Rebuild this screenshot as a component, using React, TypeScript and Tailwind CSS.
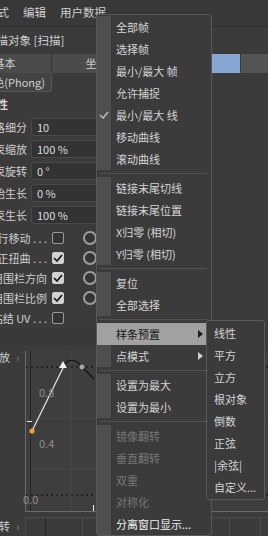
import React from "react";

type Item = {
  label: string;
  checked?: boolean;
  sub?: boolean;
  active?: boolean;
  disabled?: boolean;
  bright?: boolean;
};

const groups: Item[][] = [
  [
    { label: "全部帧" },
    { label: "选择帧" },
    { label: "最小/最大 帧" },
    { label: "允许捕捉" },
    { label: "最小/最大 线", checked: true },
    { label: "移动曲线" },
    { label: "滚动曲线" },
  ],
  [
    { label: "链接末尾切线" },
    { label: "链接末尾位置" },
    { label: "X归零 (相切)" },
    { label: "Y归零 (相切)" },
  ],
  [{ label: "复位" }, { label: "全部选择" }],
  [
    { label: "样条预置", sub: true, active: true },
    { label: "点模式", sub: true },
  ],
  [{ label: "设置为最大" }, { label: "设置为最小" }],
  [
    { label: "镜像翻转", disabled: true },
    { label: "垂直翻转", disabled: true },
    { label: "双重", disabled: true },
    { label: "对称化", disabled: true },
    { label: "分离窗口显示...", bright: true },
  ],
];

const presets = ["线性", "平方", "立方", "根对象", "倒数", "正弦", "|余弦|", "自定义..."];

const fields = [
  { label: "网格细分", value: "10" },
  { label: "结束缩放", value: "100 %" },
  { label: "结束旋转", value: "0 °" },
  { label: "开始生长", value: "0 %" },
  { label: "结束生长", value: "100 %" },
];

const checks = [
  { label: "平行移动 . . .", on: false, radio: true },
  { label: "矫正扭曲 . . .", on: true, radio: true },
  { label: "使用围栏方向", on: true, radio: true },
  { label: "使用围栏比例", on: true, radio: true },
  { label: "粘结 UV . . .", on: false, radio: false },
];

function Tick({ dark }: { dark?: boolean }) {
  return (
    <svg width="10" height="8" viewBox="0 0 10 8">
      <polyline
        points="1,4 4,7 9,1"
        fill="none"
        stroke={dark ? "#111" : "#b8b8b8"}
        strokeWidth="1.6"
      />
    </svg>
  );
}

function Arrow({ color }: { color: string }) {
  return (
    <svg width="5" height="8" viewBox="0 0 5 8">
      <polygon points="0,0 5,4 0,8" fill={color} />
    </svg>
  );
}

function ContextMenu() {
  return (
    <div className="absolute left-[96px] top-[14px] w-[116px] rounded-[3px] border border-[#585858] bg-[#3b3b3b] pt-px">
      {groups.map((g, gi) => (
        <div key={gi}>
          {gi > 0 && (
            <div className="flex h-[7px] items-center pl-[2px] pr-[4px]">
              <div className="h-px w-full bg-[#525252]" />
            </div>
          )}
          {g.map((it) => (
            <div
              key={it.label}
              className={`flex h-[22px] items-center ${it.active ? "bg-[#a1a1a1]" : ""}`}
            >
              <div
                className={`flex h-full w-[14px] shrink-0 items-center justify-center ${
                  it.active ? "" : "bg-[#4e4e4e]"
                }`}
              >
                {it.checked && <Tick />}
              </div>
              <span
                className={`flex-1 whitespace-nowrap pl-[5px] ${
                  it.active
                    ? "text-[#161616]"
                    : it.disabled
                    ? "text-[#767676]"
                    : it.bright
                    ? "text-[#f0f0f0]"
                    : "text-[#d4d4d4]"
                }`}
              >
                {it.label}
              </span>
              {it.sub && (
                <span className="pr-[8px]">
                  <Arrow color={it.active ? "#1a1a1a" : "#cfcfcf"} />
                </span>
              )}
            </div>
          ))}
        </div>
      ))}
    </div>
  );
}

function SubMenu() {
  return (
    <div className="absolute left-[206px] top-[320px] w-[59px] rounded-[3px] border border-[#5a5a5a] bg-[#3b3b3b] py-[1px]">
      {presets.map((p) => (
        <div key={p} className="flex h-[22px] items-center whitespace-nowrap pl-[7px] text-[#d4d4d4]">
          {p}
        </div>
      ))}
    </div>
  );
}

function Graph() {
  return (
    <div className="relative h-[161px] w-[243px] border-b border-l border-[#6c6c6c] bg-[#3e3e3e]">
      <svg className="absolute left-0 top-0 overflow-visible" width="243" height="160">
        {/* grid */}
        <line x1="45" y1="0" x2="45" y2="160" stroke="#474747" />
        <line x1="0" y1="67" x2="243" y2="67" stroke="#474747" />
        <line x1="0" y1="118" x2="243" y2="118" stroke="#474747" />
        <line x1="4.5" y1="0" x2="4.5" y2="160" stroke="#262626" />
        <line x1="0" y1="16" x2="243" y2="16" stroke="#111" strokeDasharray="2 3" />
        <line x1="0" y1="144" x2="243" y2="144" stroke="#111" strokeDasharray="2 3" />
        <line x1="1" y1="70.5" x2="6" y2="70.5" stroke="#eee" />
        <line x1="67.5" y1="154" x2="67.5" y2="160" stroke="#eee" />
        {/* curve */}
        <path d="M37 16 C42 6 50 8 56 16 C60 20 64 24 68 28" fill="none" stroke="#111" strokeWidth="1.2" />
        <line x1="6" y1="80" x2="37" y2="17" stroke="#e8e8e8" strokeWidth="1.2" />
        <polygon points="37,10 33,17 41,17" fill="#f2f2f2" />
        <circle cx="56" cy="16" r="2.4" fill="#a8a8a8" />
        <circle cx="6" cy="80" r="2.6" fill="#f29c38" />
        <text x="13" y="46" fill="#8d8d8d" fontSize="11">0.8</text>
        <text x="13" y="97" fill="#8d8d8d" fontSize="11">0.4</text>
        <text x="-3" y="153" fill="#8d8d8d" fontSize="11">0.0</text>
      </svg>
    </div>
  );
}

export default function App() {
  return (
    <div
      className="relative h-[536px] w-[268px] overflow-hidden bg-[#3b3b3b] text-[11px] leading-none text-[#cfcfcf]"
      style={{ fontFamily: "'Noto Sans CJK SC', 'Noto Sans', sans-serif" }}
    >
      {/* menubar */}
      <div className="flex h-[27px] items-center gap-[14px] border-b border-[#2f2f2f] bg-[#383838] pl-0">
        <span className="-ml-[14px] text-[11.5px]">模式</span>
        <span className="text-[11.5px]">编辑</span>
        <span className="text-[11.5px]">用户数据</span>
      </div>

      {/* title */}
      <div className="flex h-[27px] items-center whitespace-nowrap">
        <span className="-ml-[15px] text-[11.5px]">扫描对象 [扫描]</span>
      </div>

      {/* tabs */}
      <div className="flex h-[19px] items-stretch whitespace-nowrap bg-[#4b4b4b]">
        <div className="-ml-[42px] flex w-[94px] shrink-0 items-center justify-center border-r border-[#353535]">基本</div>
        <div className="flex w-[90px] shrink-0 items-center justify-center border-r border-[#353535]">坐标</div>
        <div className="w-[69px] shrink-0" />
        <div className="w-[29px] shrink-0 bg-[#88a6d2]" />
        <div className="flex-1 border-l border-[#3a3a3a] bg-[#545454]" />
      </div>

      {/* shading tab */}
      <div className="flex h-[19px] w-[52px] items-center justify-end overflow-hidden whitespace-nowrap rounded-br-[3px] border-b border-r border-[#555] bg-[#434343] pr-[6px]">
        着色(Phong)
      </div>

      {/* section title */}
      <div className="flex h-[24px] items-center whitespace-nowrap">
        <span className="-ml-[36px] font-bold text-[#d8d8d8]">对象属性</span>
      </div>

      {/* fields */}
      <div className="flex flex-col">
        {fields.map((f) => (
          <div key={f.label} className="flex h-[22px] items-center">
            <div className="flex w-[27px] shrink-0 justify-end overflow-hidden whitespace-nowrap">{f.label}</div>
            <div className="ml-[4px] flex h-[18px] w-[130px] items-center rounded-[3px] border border-[#4a4a4a] bg-[#333] pl-[5px] text-[#dcdcdc]">
              {f.value}
            </div>
          </div>
        ))}
      </div>

      {/* checkboxes */}
      <div className="mt-[2px] flex flex-col">
        {checks.map((c) => (
          <div key={c.label} className="flex h-[20px] items-center">
            <div className="flex w-[47px] shrink-0 justify-end overflow-hidden whitespace-nowrap">{c.label}</div>
            <div
              className={`ml-[5px] flex h-[12px] w-[12px] shrink-0 items-center justify-center rounded-[2px] border ${
                c.on ? "border-[#cfcfcf] bg-[#d2d2d2]" : "border-[#9c9c9c] bg-[#333]"
              }`}
            >
              {c.on && <Tick dark />}
            </div>
            {c.radio && (
              <div className="ml-[19px] h-[14px] w-[14px] shrink-0 rounded-full border-2 border-[#9d9d9d] bg-[#353535]" />
            )}
          </div>
        ))}
      </div>

      {/* section band */}
      <div className="mt-[2px] h-[15px] border-t border-[#343434] bg-[#393939]" />

      {/* scale graph */}
      <div className="mt-[6px] flex">
        <div className="flex w-[25px] shrink-0 items-start gap-[6px] whitespace-nowrap pt-[1px]">
          <span className="-ml-[12px]">缩放</span>
          <span className="text-[#888]">›</span>
        </div>
        <Graph />
      </div>

      {/* rotation graph */}
      <div className="mt-[5px] flex">
        <div className="flex w-[25px] shrink-0 items-start gap-[6px] whitespace-nowrap pt-[4px]">
          <span className="-ml-[12px]">旋转</span>
          <span className="text-[#888]">›</span>
        </div>
        <div className="relative h-[30px] w-[243px] border-l border-t border-[#4a4a4a]">
          <svg className="absolute left-0 top-0" width="243" height="30">
            <line x1="19.5" y1="0" x2="19.5" y2="30" stroke="#262626" />
            <line x1="56.5" y1="0" x2="56.5" y2="30" stroke="#4c4c4c" />
            <line x1="203.5" y1="0" x2="203.5" y2="30" stroke="#4c4c4c" />
            <line x1="234.5" y1="0" x2="234.5" y2="30" stroke="#4c4c4c" />
          </svg>
        </div>
      </div>

      <ContextMenu />
      <SubMenu />
    </div>
  );
}
